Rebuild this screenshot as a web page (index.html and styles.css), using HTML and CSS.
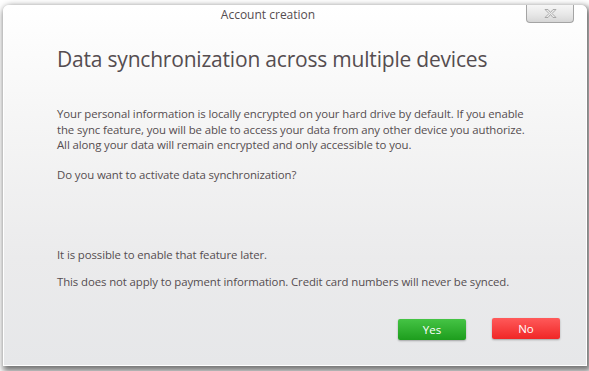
FILE: index.html
```html
<!DOCTYPE html>
<html>
<head>
<meta charset="utf-8">
<link rel="stylesheet" href="styles.css">
</head>
<body>
<div class="window">
  <div class="titlebar">
    <span class="title">Account creation</span>
    <div class="close">
      <svg width="15" height="11" viewBox="0 0 15 11"><path d="M2 1.5h3l2.5 3 2.5-3h3l-4 4 4 4h-3l-2.5-3-2.5 3h-3l4-4z" fill="#ececec" stroke="#9a9a9a" stroke-width="0.8"/></svg>
    </div>
  </div>
  <div class="content">
    <h1 class="heading">Data synchronization across multiple devices</h1>
    <p class="text">Your personal information is locally encrypted on your hard drive by default. If you enable the sync feature, you will be able to access your data from any other device you authorize. All along your data will remain encrypted and only accessible to you.</p>
    <p class="text">Do you want to activate data synchronization?</p>
    <p class="text note">It is possible to enable that feature later.</p>
    <p class="text last">This does not apply to payment information. Credit card numbers will never be synced.</p>
    <div class="actions">
      <button class="btn yes">Yes</button>
      <button class="btn no">No</button>
    </div>
  </div>
</div>
</body>
</html>
```
FILE: styles.css
```css
html, body { margin: 0; padding: 0; }
body {
  width: 589px;
  height: 371px;
  background: #ffffff;
  overflow: hidden;
  font-family: "Open Sans", "Noto Sans", sans-serif;
}
.window {
  margin: 5px 0 0 3px;
  width: 582px;
  height: 359px;
  border: 1px solid #ffffff;
  border-radius: 6px 6px 0 0;
  background: linear-gradient(#ffffff 0%, #f6f6f6 30%, #ebebec 70%, #e6e7e9 100%);
  box-shadow: 2px 3px 6px 2px rgba(0,0,0,0.55);
  position: relative;
  display: flex;
  flex-direction: column;
}
.titlebar {
  height: 19px;
  display: flex;
  justify-content: center;
  align-items: center;
  padding-right: 54px;
}
.title {
  font-size: 12px;
  color: #554d50;
  margin-top: -2px;
}
.close {
  position: absolute;
  top: -1px;
  right: 12px;
  width: 46px;
  height: 17px;
  border: 1px solid #a4a4a4;
  border-top: none;
  border-radius: 0 0 4px 4px;
  background: linear-gradient(#f6f6f6, #e6e6e6 60%, #d6d6d6);
  display: flex;
  justify-content: center;
  align-items: center;
}
.close svg { display: block; }
.content {
  flex: 1;
  padding: 0 26px 0 53px;
  display: flex;
  flex-direction: column;
}
.heading {
  margin: 19px 0 0 0;
  font-size: 21px;
  font-weight: 400;
  color: #554d50;
  letter-spacing: -0.2px;
  line-height: 30px;
}
.text {
  margin: 32px 0 0 0;
  max-width: 478px;
  font-size: 11.4px;
  line-height: 15.5px;
  color: #554d50;
  letter-spacing: -0.1px;
}
.text + .text { margin-top: 14px; }
.text.note { margin-top: 65px; }
.text.last { margin-top: 11px; }
.actions {
  margin-top: auto;
  margin-bottom: 25px;
  display: flex;
  justify-content: flex-end;
  gap: 26px;
}
.btn {
  width: 68px;
  height: 21px;
  border: none;
  border-radius: 2px;
  color: #ffffff;
  font-family: "Open Sans", sans-serif;
  font-size: 11.5px;
  padding: 0;
  box-shadow: 0 1px 2px rgba(0,0,0,0.3);
}
.yes {
  background: linear-gradient(#45c445, #1d9d1d);
  margin-top: 1px;
}
.no {
  background: linear-gradient(#ff5a5a, #f02626);
}
```
